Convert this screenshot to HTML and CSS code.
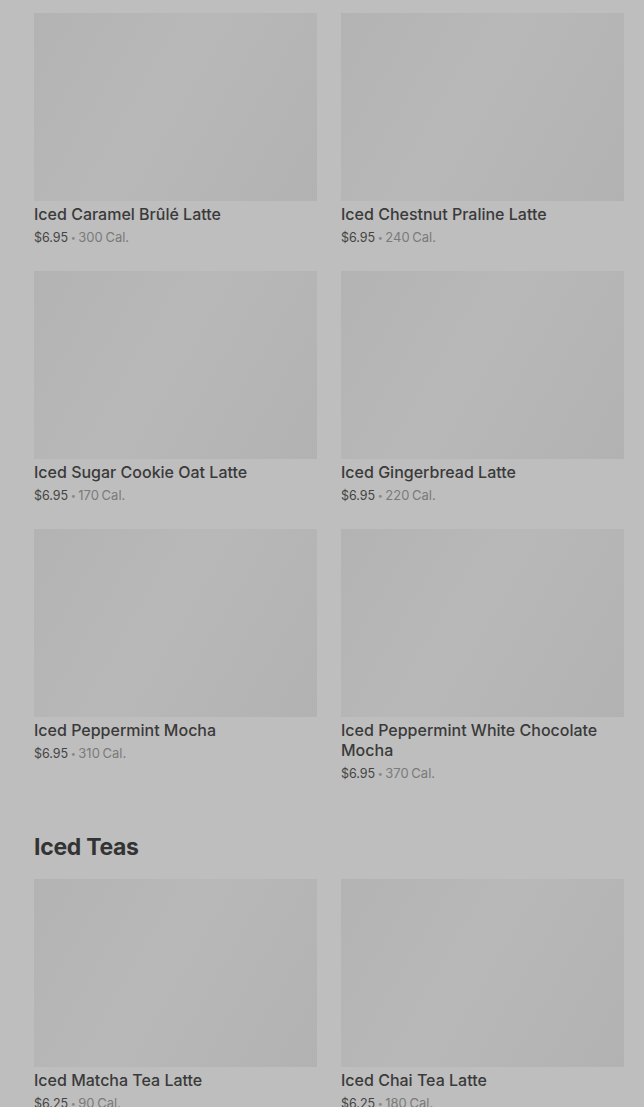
FILE: index.html
```html
<!DOCTYPE html>
<html>
<head>
<meta charset="utf-8">
<link rel="stylesheet" href="styles.css">
</head>
<body>
<main class="menu">
  <section class="grid">
    <article class="card"><div class="thumb"></div><h3 class="name">Iced Caramel Brûlé Latte</h3><p class="meta"><span class="price">$6.95</span> <span class="dot">•</span> <span class="cal">300 Cal.</span></p></article>
    <article class="card"><div class="thumb"></div><h3 class="name">Iced Chestnut Praline Latte</h3><p class="meta"><span class="price">$6.95</span> <span class="dot">•</span> <span class="cal">240 Cal.</span></p></article>
    <article class="card"><div class="thumb"></div><h3 class="name">Iced Sugar Cookie Oat Latte</h3><p class="meta"><span class="price">$6.95</span> <span class="dot">•</span> <span class="cal">170 Cal.</span></p></article>
    <article class="card"><div class="thumb"></div><h3 class="name">Iced Gingerbread Latte</h3><p class="meta"><span class="price">$6.95</span> <span class="dot">•</span> <span class="cal">220 Cal.</span></p></article>
    <article class="card"><div class="thumb"></div><h3 class="name">Iced Peppermint Mocha</h3><p class="meta"><span class="price">$6.95</span> <span class="dot">•</span> <span class="cal">310 Cal.</span></p></article>
    <article class="card"><div class="thumb"></div><h3 class="name">Iced Peppermint White Chocolate Mocha</h3><p class="meta"><span class="price">$6.95</span> <span class="dot">•</span> <span class="cal">370 Cal.</span></p></article>
  </section>
  <h2 class="section-title">Iced Teas</h2>
  <section class="grid">
    <article class="card"><div class="thumb"></div><h3 class="name">Iced Matcha Tea Latte</h3><p class="meta"><span class="price">$6.25</span> <span class="dot">•</span> <span class="cal">90 Cal.</span></p></article>
    <article class="card"><div class="thumb"></div><h3 class="name">Iced Chai Tea Latte</h3><p class="meta"><span class="price">$6.25</span> <span class="dot">•</span> <span class="cal">180 Cal.</span></p></article>
  </section>
</main>
</body>
</html>
```
FILE: styles.css
```css
html, body {
  margin: 0;
  padding: 0;
  background: #bebebe;
}
body {
  font-family: Inter, "Noto Sans", sans-serif;
  color: #3a3a3a;
  height: 1107px;
  overflow: hidden;
}
.menu {
  padding: 13px 20px 0 34px;
}
.grid {
  display: grid;
  grid-template-columns: 283px 283px;
  column-gap: 24px;
  row-gap: 24px;
}
.card {
  display: flex;
  flex-direction: column;
}
.thumb {
  height: 188px;
  background: linear-gradient(120deg, #b3b3b3 0%, #b8b8b8 45%, #b2b2b2 100%);
}
.name {
  margin: 3px 0 0;
  font-size: 16px;
  font-weight: 500;
  line-height: 20px;
  color: #3a3a3a;
}
.meta {
  margin: 4px 0 0;
  font-size: 12.5px;
  line-height: 19px;
  color: #707070;
  word-spacing: -1px;
}
.price {
  color: #444;
}
.dot {
  font-size: 9px;
  color: #888;
  vertical-align: 1px;
}
.cal {
  color: #7a7a7a;
  font-size: 13px;
}
.section-title {
  margin: 48px 0 16px;
  font-size: 23px;
  line-height: 32px;
  font-weight: 700;
  color: #333;
  letter-spacing: -0.3px;
}
```
